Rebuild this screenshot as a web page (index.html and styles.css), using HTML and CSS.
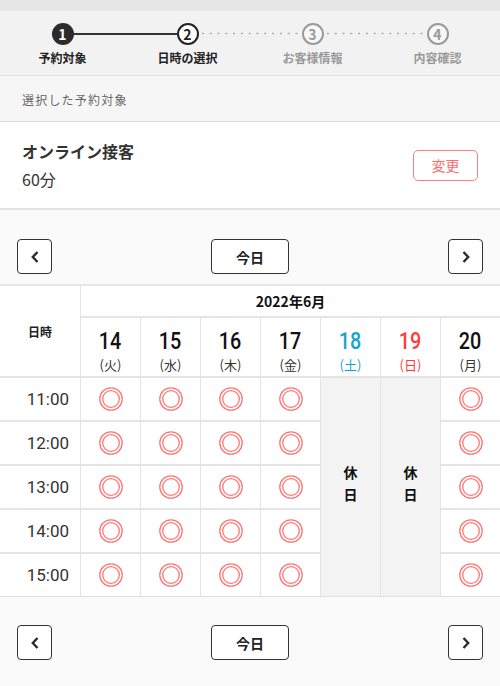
FILE: index.html
```html
<!DOCTYPE html>
<html lang="ja">
  <head>
    <meta charset="UTF-8" />
    <meta name="viewport" content="width=device-width, initial-scale=1.0" />
    <title>日時の選択</title>
    <link rel="stylesheet" href="styles.css">
  </head>
  <body>
    <div class="topbar"></div>

    <ol class="steps">
      <li class="step done"><span class="num">1</span><span class="label">予約対象</span></li>
      <li class="step current"><span class="num">2</span><span class="label">日時の選択</span></li>
      <li class="step todo"><span class="num">3</span><span class="label">お客様情報</span></li>
      <li class="step todo"><span class="num">4</span><span class="label">内容確認</span></li>
    </ol>

    <div class="section-title">選択した予約対象</div>
    <div class="selected">
      <div>
        <div class="menu-name">オンライン接客</div>
        <div class="menu-time">60分</div>
      </div>
      <button class="change-btn">変更</button>
    </div>

    <div class="calendar-nav">
      <button class="nav-btn"><svg width="10" height="14" viewBox="0 0 10 14"><path d="M7.5 2 L2.8 7 L7.5 12" /></svg></button>
      <button class="today-btn">今日</button>
      <button class="nav-btn"><svg width="10" height="14" viewBox="0 0 10 14"><path d="M2.5 2 L7.2 7 L2.5 12" /></svg></button>
    </div>

    <div class="calendar-wrap">
      <div class="calendar" id="calendar">
        <div class="head-label">日時</div>
        <div class="month">2022年6月</div>
      </div>
    </div>

    <div class="calendar-nav bottom">
      <button class="nav-btn"><svg width="10" height="14" viewBox="0 0 10 14"><path d="M7.5 2 L2.8 7 L7.5 12" /></svg></button>
      <button class="today-btn">今日</button>
      <button class="nav-btn"><svg width="10" height="14" viewBox="0 0 10 14"><path d="M2.5 2 L7.2 7 L2.5 12" /></svg></button>
    </div>

    <script>
      const days = [
        { d: 14, w: "火" },
        { d: 15, w: "水" },
        { d: 16, w: "木" },
        { d: 17, w: "金" },
        { d: 18, w: "土", type: "sat", off: true },
        { d: 19, w: "日", type: "sun", off: true },
        { d: 20, w: "月" },
      ];
      const times = ["11:00", "12:00", "13:00", "14:00", "15:00"];
      const mark =
        '<svg width="24" height="24" viewBox="0 0 24 24"><circle cx="12" cy="12" r="11.2" /><circle cx="12" cy="12" r="8.3" /></svg>';

      const cal = document.getElementById("calendar");
      let html = "";

      days.forEach((day) => {
        html += `<div class="day ${day.type || ""}"><span class="day-num">${day.d}</span><span class="day-week">(${day.w})</span></div>`;
      });

      times.forEach((t, row) => {
        html += `<div class="time">${t}</div>`;
        days.forEach((day) => {
          if (day.off) {
            if (row === 0) html += '<div class="holiday">休<br />日</div>';
          } else {
            html += `<div class="slot">${mark}</div>`;
          }
        });
      });

      cal.insertAdjacentHTML("beforeend", html);
    </script>
  </body>
</html>
```

FILE: styles.css
```css
body {
  margin: 0;
  font-family: "Noto Sans CJK JP", sans-serif;
  color: #333;
  background-color: #fafafa;
}

button {
  font-family: inherit;
  cursor: pointer;
}

.topbar {
  height: 11px;
  background-color: #e6e6e6;
}

/* steps */
.steps {
  list-style: none;
  margin: 0;
  padding: 12px 0 0;
  height: 65px;
  box-sizing: border-box;
  display: grid;
  grid-template-columns: repeat(4, 1fr);
  background-color: #f2f2f2;
  border-bottom: 1px solid #e3e3e3;
}

.step {
  position: relative;
  display: flex;
  flex-direction: column;
  align-items: center;
}

.step:not(:last-child)::after {
  content: "";
  position: absolute;
  top: 10px;
  left: calc(50% + 11px);
  width: calc(100% - 22px);
  height: 2px;
  background-color: #333;
}

.step.current::after,
.step.todo::after {
  top: 9px;
  height: 3px;
  background: radial-gradient(circle, #a8a8a8 0.8px, transparent 1.2px) 0 0 / 7.8px 3px repeat-x;
}

.num {
  position: relative;
  z-index: 1;
  width: 22px;
  height: 22px;
  box-sizing: border-box;
  border-radius: 50%;
  display: flex;
  align-items: center;
  justify-content: center;
  font-size: 14px;
  font-weight: 700;
  line-height: 1;
}

.done .num {
  background-color: #2b2b2b;
  color: #fff;
}

.current .num {
  background-color: #fff;
  border: 2.5px solid #222;
  color: #222;
}

.todo .num {
  background-color: #f7f7f7;
  border: 2.5px solid #9a9a9a;
  color: #9a9a9a;
}

.label {
  margin-top: 5px;
  font-size: 12px;
  font-weight: 700;
  line-height: 16px;
  color: #222;
}

.todo .label {
  color: #999;
}

/* selected menu */
.section-title {
  height: 46px;
  box-sizing: border-box;
  padding: 2px 0 0 22px;
  line-height: 44px;
  font-size: 12px;
  letter-spacing: 1.2px;
  color: #666;
  background-color: #f6f6f6;
  border-bottom: 1px solid #dcdcdc;
}

.selected {
  height: 88px;
  box-sizing: border-box;
  padding: 0 22px;
  display: flex;
  align-items: center;
  justify-content: space-between;
  background-color: #fff;
  border-bottom: 2px solid #e2e2e2;
}

.menu-name {
  font-size: 16px;
  font-weight: 700;
  line-height: 22px;
  color: #333;
}

.menu-time {
  margin-top: 6px;
  font-size: 16px;
  line-height: 22px;
  color: #333;
}

.change-btn {
  width: 65px;
  height: 31px;
  padding: 0;
  border: 1.5px solid #ff7f7f;
  border-radius: 5px;
  background-color: #fff;
  color: #ff6b6b;
  font-size: 14px;
}

/* calendar navigation */
.calendar-nav {
  display: flex;
  justify-content: space-between;
  padding: 29px 17px 10px;
  background-color: #fafafa;
}

.calendar-nav.bottom {
  padding: 28px 17px 25px;
}

.nav-btn,
.today-btn {
  height: 35px;
  padding: 0;
  border: 1.5px solid #333;
  border-radius: 4px;
  background-color: #fff;
  display: flex;
  align-items: center;
  justify-content: center;
}

.nav-btn {
  width: 35px;
}

.nav-btn path {
  fill: none;
  stroke: #2b2b2b;
  stroke-width: 2.4;
}

.today-btn {
  width: 78px;
  font-size: 14px;
  font-weight: 700;
  color: #222;
}

/* calendar grid */
.calendar-wrap {
  overflow: hidden;
}

.calendar {
  display: grid;
  grid-template-columns: 80px repeat(7, 59px);
  grid-template-rows: 30px 58px repeat(5, 42px);
  gap: 2px 1px;
  background-color: #e4e4e4;
  border-top: 2px solid #e6e6e6;
  border-bottom: 1px solid #e0e0e0;
}

.calendar > div {
  background-color: #fff;
}

.head-label {
  grid-row: span 2;
  display: flex;
  align-items: center;
  justify-content: center;
  font-size: 12px;
  font-weight: 700;
  color: #222;
}

.month {
  grid-column: span 7;
  display: flex;
  align-items: center;
  justify-content: center;
  font-size: 14px;
  font-weight: 700;
  color: #111;
}

.day {
  display: flex;
  flex-direction: column;
  align-items: center;
  padding-top: 11px;
  color: #111;
}

.day-num {
  display: inline-block;
  font-family: Roboto, sans-serif;
  font-size: 23px;
  font-weight: 500;
  line-height: 25px;
  transform: scaleX(0.86);
}

.day-week {
  margin-top: 2px;
  font-size: 13px;
  line-height: 17px;
  color: #333;
}

.day.sat .day-num,
.day.sat .day-week {
  color: #13a6cc;
}

.day.sun .day-num,
.day.sun .day-week {
  color: #ff3c3c;
}

.time {
  display: flex;
  align-items: center;
  justify-content: flex-end;
  padding-right: 11px;
  font-family: Roboto, sans-serif;
  font-size: 17px;
  color: #333;
}

.slot {
  display: flex;
  align-items: center;
  justify-content: center;
}

.slot circle {
  fill: none;
  stroke: #ff7676;
  stroke-width: 1.3;
}

.calendar > .holiday {
  grid-row: span 5;
  display: flex;
  align-items: center;
  justify-content: center;
  padding-bottom: 8px;
  background-color: #f3f3f3;
  text-align: center;
  font-size: 14px;
  font-weight: 700;
  line-height: 22px;
  color: #111;
}
```
